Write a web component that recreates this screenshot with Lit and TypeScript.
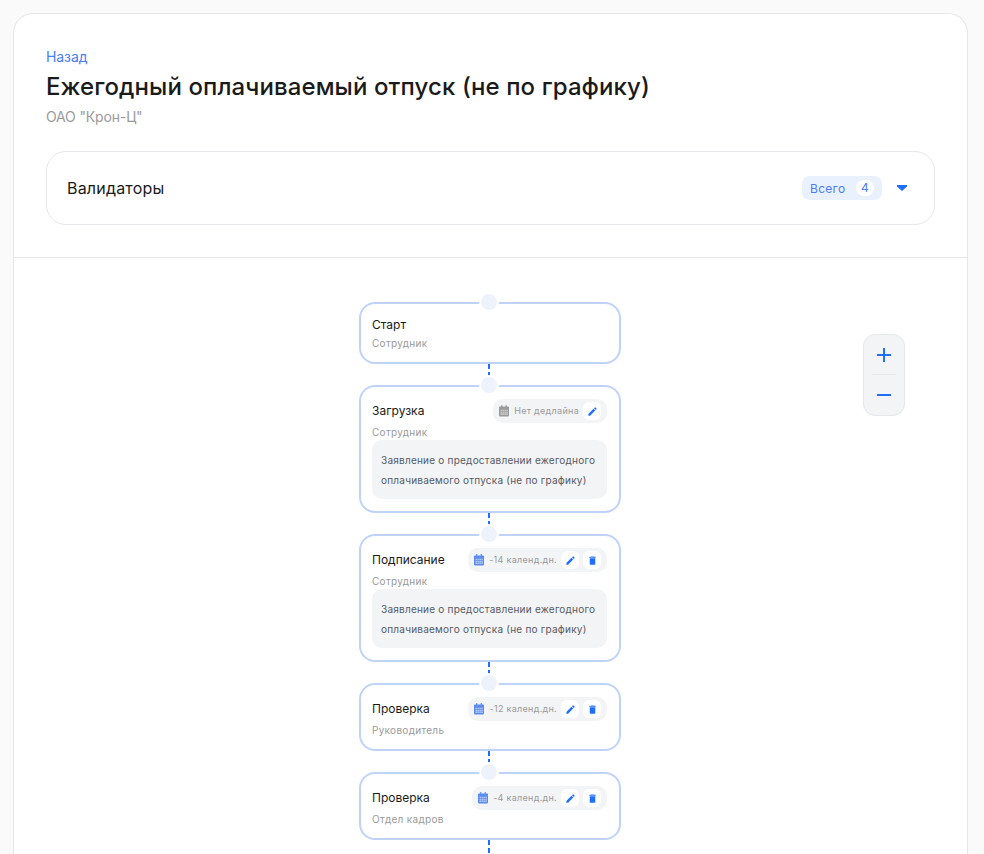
import { LitElement, html, css, svg } from 'lit';
import { customElement } from 'lit/decorators.js';

interface FlowNode {
  title: string;
  role: string;
  deadline?: string;
  removable?: boolean;
  doc?: string;
}

const DOC = 'Заявление о предоставлении ежегодного оплачиваемого отпуска (не по графику)';

const NODES: FlowNode[] = [
  { title: 'Старт', role: 'Сотрудник' },
  { title: 'Загрузка', role: 'Сотрудник', deadline: 'Нет дедлайна', doc: DOC },
  { title: 'Подписание', role: 'Сотрудник', deadline: '-14 календ.дн.', removable: true, doc: DOC },
  { title: 'Проверка', role: 'Руководитель', deadline: '-12 календ.дн.', removable: true },
  { title: 'Проверка', role: 'Отдел кадров', deadline: '-4 календ.дн.', removable: true },
];

const calendarIcon = svg`<svg class="cal" viewBox="3 1.5 18 20.5" width="10" height="11.4" fill="currentColor"><path fill-rule="evenodd" d="M7 1.5h2V4h6V1.5h2V4h2.5A1.5 1.5 0 0 1 21 5.5v15a1.5 1.5 0 0 1-1.500 1.500h-15A1.500 1.500 0 0 1 3 20.500v-15A1.500 1.500 0 0 1 4.500 4H7V1.500zM6 10v2h2v-2H6zm3.500 0v2h2v-2h-2zm3.500 0v2h2v-2h-2zm3.500 0v2h2v-2h-2zM6 13.500v2h2v-2H6zm3.500 0v2h2v-2h-2zm3.500 0v2h2v-2h-2zm3.500 0v2h2v-2h-2zM6 17v2h2v-2H6zm3.500 0v2h2v-2h-2zm3.500 0v2h2v-2h-2zm3.500 0v2h2v-2h-2z"/></svg>`;
const editIcon = svg`<svg viewBox="0 0 24 24" width="11" height="11" fill="currentColor"><path d="M3 17.25V21h3.75L17.81 9.94l-3.75-3.75L3 17.25zM20.71 7.04a1 1 0 0 0 0-1.41l-2.34-2.34a1 1 0 0 0-1.41 0l-1.83 1.83 3.75 3.75 1.83-1.83z"/></svg>`;
const trashIcon = svg`<svg viewBox="0 0 24 24" width="11" height="11" fill="currentColor"><path d="M6 19a2 2 0 0 0 2 2h8a2 2 0 0 0 2-2V7H6v12zM19 4h-3.5l-1-1h-5l-1 1H5v2h14V4z"/></svg>`;

@customElement('app-root')
export class AppRoot extends LitElement {
  static override styles = css`
    :host {
      display: block;
      height: 854px;
      overflow: hidden;
      box-sizing: border-box;
      padding: 13px 16px 0 13px;
      background: #fafafa;
      font-family: Inter, 'Liberation Sans', sans-serif;
      color: #1a1a1a;
    }

    .page {
      position: relative;
      background: #fff;
      border: 1px solid #e5e7eb;
      border-bottom: none;
      border-radius: 20px 20px 0 0;
      height: 900px;
    }

    .head {
      padding: 34px 32px 32px;
      border-bottom: 1px solid #e5e7eb;
    }

    .back {
      font-size: 14px;
      line-height: 18px;
      letter-spacing: -0.1px;
      color: #4a7cf6;
    }

    h1 {
      margin: 4px 0 0;
      font-size: 24px;
      line-height: 34px;
      font-weight: 500;
      letter-spacing: 0.1px;
      color: #1a1a1a;
    }

    .org {
      margin-top: 4px;
      font-size: 14px;
      line-height: 18px;
      letter-spacing: -0.15px;
      color: #9a9a9a;
    }

    .validators {
      margin-top: 25px;
      height: 74px;
      box-sizing: border-box;
      border: 1px solid #e5e7eb;
      border-radius: 20px;
      padding: 0 27px 0 20px;
      display: flex;
      align-items: center;
    }

    .validators .label {
      font-size: 16px;
      letter-spacing: 0.2px;
      flex: 1;
    }

    .total {
      display: flex;
      align-items: center;
      height: 24px;
      width: 80px;
      box-sizing: border-box;
      padding: 0 8px;
      border-radius: 8px;
      background: #eaf1fe;
      color: #4a7cf6;
      font-size: 12px;
      letter-spacing: 0.3px;
      justify-content: space-between;
    }

    .total b {
      font-weight: 400;
      width: 18px;
      height: 16px;
      line-height: 16px;
      text-align: center;
      border-radius: 8px;
      background: #fff;
    }

    .caret {
      margin-left: 15px;
      color: #1f6fff;
    }

    .canvas {
      padding: 44px 0 0 345px;
      display: flex;
      flex-direction: column;
      align-items: flex-start;
    }

    .node {
      position: relative;
      width: 262px;
      box-sizing: border-box;
      padding: 12px 12px 11px 11px;
      border: 2px solid #bfd3f9;
      border-radius: 16px;
      background: #fff;
    }

    .dot {
      position: absolute;
      top: -12px;
      left: 118px;
      width: 16px;
      height: 16px;
      border: 2px solid #fff;
      border-radius: 50%;
      background: #edf2fd;
    }

    .link {
      width: 2px;
      height: 21px;
      margin-left: 129px;
      background: repeating-linear-gradient(#1f6fff 0 5px, transparent 5px 8px);
    }

    .row {
      display: flex;
      align-items: center;
      justify-content: space-between;
      min-height: 24px;
    }

    .title {
      font-size: 12px;
      line-height: 18px;
      color: #1a1a1a;
    }

    .role {
      margin-top: 2px;
      font-size: 10px;
      line-height: 15px;
      letter-spacing: 0.3px;
      color: #9a9a9a;
    }

    .node.plain .row {
      min-height: 18px;
    }

    .pill {
      display: flex;
      align-items: center;
      height: 24px;
      box-sizing: border-box;
      padding: 0 6px;
      border-radius: 10px;
      background: #f3f4f6;
      font-size: 9px;
      letter-spacing: 0.3px;
      color: #9a9a9a;
    }

    .pill .cal {
      margin-right: 5px;
      color: #5a8cf0;
    }

    .pill.none .cal {
      color: #9a9a9a;
    }

    .pill .when {
      padding-bottom: 1px;
    }

    .btn {
      display: flex;
      align-items: center;
      justify-content: center;
      width: 18px;
      height: 18px;
      margin-left: 4px;
      border-radius: 6px;
      background: #fff;
      color: #1f6fff;
    }

    .doc {
      margin-bottom: 1px;
      padding: 10px 9px 9px;
      border-radius: 10px;
      background: #f3f4f6;
      font-size: 10px;
      line-height: 20px;
      letter-spacing: 0.23px;
      color: #555a63;
    }

    .zoom {
      position: absolute;
      top: 320px;
      left: 849px;
      width: 42px;
      height: 82px;
      box-sizing: border-box;
      border: 1px solid #e5e7eb;
      border-radius: 12px;
      background: #f3f4f6;
      display: flex;
      flex-direction: column;
      align-items: center;
      color: #1f6fff;
    }

    .zoom svg {
      flex: none;
      margin: 13px 0 12px;
    }

    .zoom i {
      flex: none;
      width: 24px;
      height: 1px;
      background: #e5e7eb;
    }
  `;

  private renderNode(n: FlowNode) {
    return html`
      <div class="node ${n.deadline ? '' : 'plain'}">
        <span class="dot"></span>
        <div class="row">
          <span class="title">${n.title}</span>
          ${n.deadline
            ? html`<div class="pill ${n.removable ? '' : 'none'}">
                ${calendarIcon}
                <span class="when">${n.deadline}</span>
                <span class="btn">${editIcon}</span>
                ${n.removable ? html`<span class="btn">${trashIcon}</span>` : ''}
              </div>`
            : ''}
        </div>
        <div class="role">${n.role}</div>
        ${n.doc ? html`<div class="doc">${n.doc}</div>` : ''}
      </div>
    `;
  }

  protected override render() {
    return html`
      <div class="page">
        <div class="head">
          <div class="back">Назад</div>
          <h1>Ежегодный оплачиваемый отпуск (не по графику)</h1>
          <div class="org">ОАО "Крон-Ц"</div>
          <div class="validators">
            <span class="label">Валидаторы</span>
            <div class="total"><span>Всего</span><b>4</b></div>
            <svg class="caret" viewBox="0 0 10 6" width="10" height="6" fill="currentColor"><path d="M0 0h10v1.500L5 6 0 1.500z"/></svg>
          </div>
        </div>
        <div class="canvas">
          ${NODES.map((n) => html`${this.renderNode(n)}<div class="link"></div>`)}
        </div>
        <div class="zoom">
          <svg viewBox="0 0 14 14" width="14" height="14" fill="currentColor"><path d="M6 0h2v6h6v2H8v6H6V8H0V6h6z"/></svg>
          <i></i>
          <svg viewBox="0 0 14 14" width="14" height="14" fill="currentColor"><path d="M0 6h14v2H0z"/></svg>
        </div>
      </div>
    `;
  }
}
